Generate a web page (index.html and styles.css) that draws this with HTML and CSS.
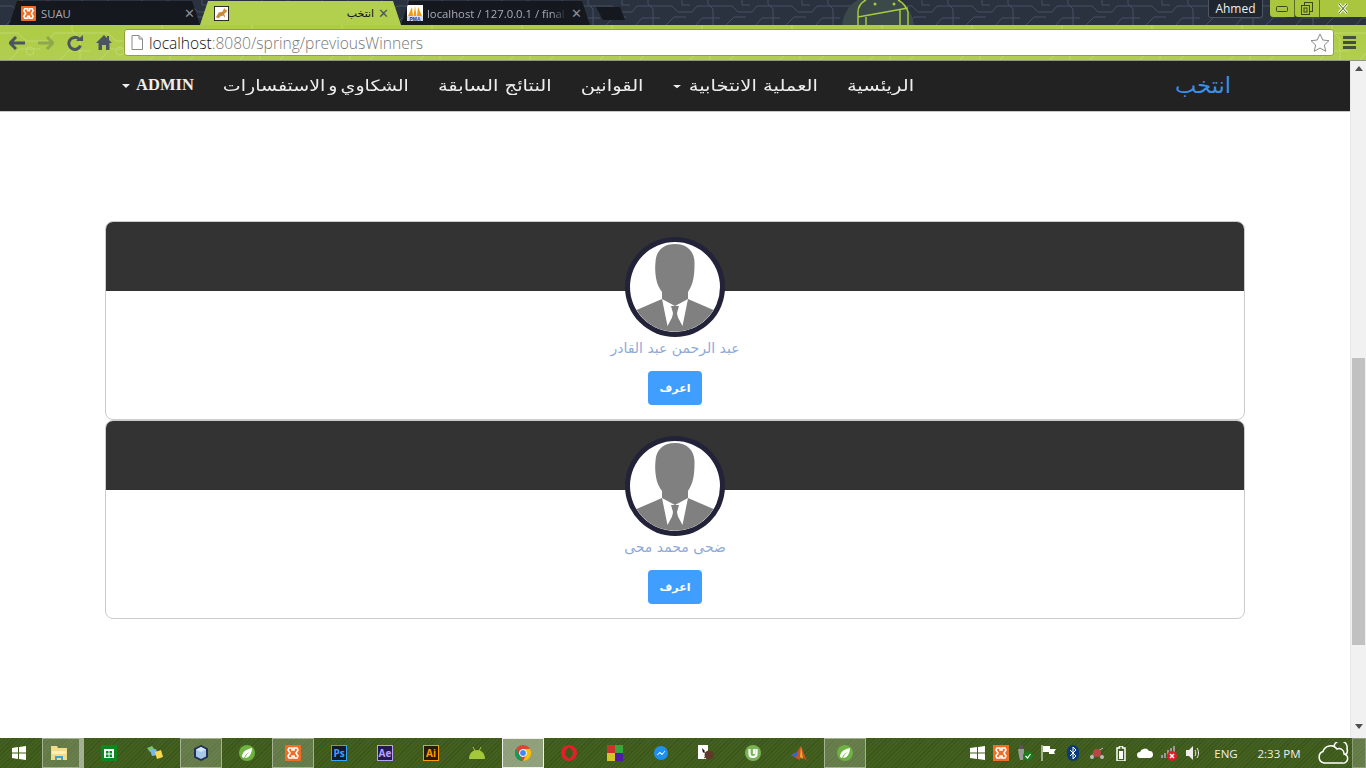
FILE: index.html
```html
<!DOCTYPE html>
<html lang="ar">
<head>
  <meta charset="UTF-8">
  <title>انتخب</title>
  <link rel="stylesheet" href="styles.css">
</head>
<body>
  <div class="tabstrip">
    <!-- circuit wallpaper -->
    <svg class="circuit" width="1366" height="25">
      <defs>
        <pattern id="wires" width="60" height="25" patternUnits="userSpaceOnUse">
          <path d="M0 6h12l6 6h14l5-6h23M6 25l8-8h12M36 25l6-7h18M48 0v4l5 5v16M22 0v5h8" fill="none" stroke="#465062" stroke-width="1"/>
        </pattern>
      </defs>
      <rect width="1366" height="25" fill="url(#wires)"/>
    </svg>
    <svg class="android" width="72" height="25" viewBox="0 0 72 25">
      <path d="M0 25C2 12 8 4 16 0h40c8 4 14 12 16 25z" fill="#3b4a48"/>
      <path d="M16 25V12C16 6 20 2 24 0M66 25V12C64 6 60 2 56 0M16 17l50-9M24 25v-8M58 25V9" fill="none" stroke="#a8c93f" stroke-width="1.500"/>
      <circle cx="33" cy="4" r="1.500" fill="#a8c93f"/><circle cx="52" cy="4" r="1.500" fill="#a8c93f"/>
    </svg>

    <div class="tab tab-first">
      <svg class="favicon" viewBox="0 0 16 16"><rect width="16" height="16" rx="1" fill="#f26c21"/><path d="M4 3h3v2h2V3h3l1 2-2 3 2 3-1 2H9v-2H7v2H4l-1-2 2-3-2-3z" fill="none" stroke="#fff" stroke-width="1.600"/></svg>
      <span class="tab-title">SUAU</span>
      <span class="tab-close">✕</span>
    </div>
    <div class="tab tab-active">
      <svg class="favicon" viewBox="0 0 16 16"><rect x=".5" y=".5" width="15" height="15" fill="#fff" stroke="#222"/><path d="M2 12l3-5 4-1 2-4 1 2 2 0-1 3-2 1 1 5-2-3-3 1-2 2z" fill="#c98a3a"/></svg>
      <span class="tab-title tab-title-end" dir="rtl">انتخب</span>
      <span class="tab-close">✕</span>
    </div>
    <div class="tab tab-third">
      <svg class="favicon" viewBox="0 0 16 16"><rect width="16" height="16" fill="#fff"/><path d="M1 11L5 2l1 9zM6.500 11L8 1l1.500 10zM10 11l1-9 4 9z" fill="#f29b12"/><rect y="11" width="16" height="5" fill="#d9dcf0"/><text class="pma" x="8" y="15.500">PMA</text></svg>
      <span class="tab-title tab-title-fade">localhost / 127.0.0.1 / final</span>
      <span class="tab-close">✕</span>
    </div>
    <div class="tab-new"></div>

    <div class="user-badge">Ahmed</div>
    <div class="win-controls">
      <span class="win-btn"><svg width="12" height="6"><rect x=".5" y=".5" width="11" height="5" rx="1" fill="none" stroke="#3c4a1a"/></svg></span>
      <span class="win-btn"><svg width="12" height="13"><rect x="3.500" y=".5" width="8" height="9" fill="none" stroke="#3c4a1a"/><rect x=".5" y="3.500" width="8" height="9" fill="#a9c63e" stroke="#3c4a1a"/><rect x="3" y="6" width="3" height="4" fill="none" stroke="#3c4a1a"/></svg></span>
      <span class="win-btn win-close"><svg width="12" height="11"><path d="M2 1l8 9M10 1l-8 9" stroke="#f3f7df" stroke-width="3"/><path d="M2 1l8 9M10 1l-8 9" stroke="#4a5a20" stroke-width="1"/></svg></span>
    </div>
  </div>

  <div class="toolbar">
    <svg class="toolbar-wires" width="1366" height="35">
      <defs>
        <pattern id="wires-light" width="90" height="35" patternUnits="userSpaceOnUse">
          <path d="M0 8h18l8 8h22l6-8h36M10 35l10-11h20M60 35l8-9h22M72 0v6l8 8v21" fill="none" stroke="#bfd96a" stroke-width="1"/>
          <circle cx="30" cy="26" r="4" fill="none" stroke="#bfd96a"/>
        </pattern>
      </defs>
      <rect width="1366" height="35" fill="url(#wires-light)"/>
    </svg>
    <svg class="tool" width="16" height="14" viewBox="0 0 16 14"><path d="M7 1L1 7l6 6M1 7h15" fill="none" stroke="#4a5560" stroke-width="3"/></svg>
    <svg class="tool" width="16" height="14" viewBox="0 0 16 14"><path d="M9 1l6 6-6 6M15 7H0" fill="none" stroke="#8fa84a" stroke-width="3"/></svg>
    <svg class="tool" width="16" height="16" viewBox="0 0 16 16"><path d="M13.500 10.500A6 6 0 1 1 12 4" fill="none" stroke="#4a5560" stroke-width="3"/><path d="M9 6h7V0z" fill="#4a5560"/></svg>
    <svg class="tool" width="16" height="15" viewBox="0 0 16 15"><path d="M8 0L0 8h2.500v7H6v-5h4v5h3.500V8H16l-3-3V1h-2v2z" fill="#4a5560"/></svg>
    <div class="urlbar">
      <svg width="12" height="15" viewBox="0 0 12 15"><path d="M1 .5h7l3.500 3.500v10.500H1zM8 .5V4h3.500" fill="#fff" stroke="#8a8a8a"/></svg>
      <span class="url"><b>localhost</b>:8080/spring/previousWinners</span>
      <svg class="star" width="20" height="19" viewBox="0 0 20 19"><path d="M10 1l2.800 6 6.200.7-4.600 4.300 1.300 6.300L10 15l-5.700 3.300L5.600 12 1 7.700 7.200 7z" fill="#fff" stroke="#8a8a8a"/></svg>
    </div>
    <div class="menu-btn"><i></i><i></i><i></i></div>
  </div>

  <div class="viewport">
    <div class="page" dir="rtl">
      <nav class="navbar">
        <div class="nav-inner">
          <a class="brand">انتخب</a>
          <ul class="nav-links">
            <li>الريئسية</li>
            <li>العملية الانتخابية <span class="caret"></span></li>
            <li>القوانين</li>
            <li>النتائج السابقة</li>
            <li class="nav-long">الشكاوي و الاستفسارات</li>
            <li class="nav-admin">ADMIN <span class="caret"></span></li>
          </ul>
        </div>
      </nav>

      <div class="container">
        <div class="card">
          <div class="card-head"></div>
          <svg class="avatar" viewBox="0 0 90 90">
            <path d="M45 2c12 0 19 7 19.500 18 0 5 0 10-1 16-1 6-3 10-5.500 14v7l25.500 11A45 45 0 0 1 6.500 68L32 57v-7c-3-4-5-8-6-14-1-6-1-11-.5-16C26 9 33 2 45 2z" fill="#808080"/>
            <path d="M32 57l13 7 13-7-5.500 27L45 70l-7.500 14z" fill="#fff"/>
            <path d="M41 64h8l-2 7 2 11-4 4-4-4 2-11z" fill="#808080"/>
          </svg>
          <div class="winner-name">عبد الرحمن عبد القادر</div>
          <button class="btn-more">اعرف</button>
        </div>

        <div class="card">
          <div class="card-head"></div>
          <svg class="avatar" viewBox="0 0 90 90">
            <path d="M45 2c12 0 19 7 19.500 18 0 5 0 10-1 16-1 6-3 10-5.500 14v7l25.500 11A45 45 0 0 1 6.500 68L32 57v-7c-3-4-5-8-6-14-1-6-1-11-.5-16C26 9 33 2 45 2z" fill="#808080"/>
            <path d="M32 57l13 7 13-7-5.500 27L45 70l-7.500 14z" fill="#fff"/>
            <path d="M41 64h8l-2 7 2 11-4 4-4-4 2-11z" fill="#808080"/>
          </svg>
          <div class="winner-name">ضحى محمد محى</div>
          <button class="btn-more">اعرف</button>
        </div>
      </div>
    </div>

    <div class="scrollbar">
      <span class="arrow-up"></span>
      <span class="thumb"></span>
      <span class="arrow-down"></span>
    </div>
  </div>

  <div class="taskbar">
    <div class="task task-start"><svg width="14" height="14" viewBox="0 0 14 14"><path d="M0 2l6-1v5.500H0zM7 1l7-1v6.500H7zM0 7.500h6V13l-6-1zM7 7.500h7V14l-7-1z" fill="#fff"/></svg></div>
    <div class="task task-open task-explorer"><svg width="18" height="16" viewBox="0 0 18 16"><path d="M1 1h6l1 2h9v12H1z" fill="#f2dc85"/><path d="M2 6h14v3H2z" fill="#fbf0bb"/><path d="M5 15v-4h8v4h-2v-2H7v2z" fill="#3ea2dc"/></svg></div>
    <div class="task"><svg width="16" height="16" viewBox="0 0 16 16"><rect width="16" height="16" fill="#0a8a1e"/><rect x="3" y="4" width="10" height="9" fill="#fff"/><path d="M5 6h2.500v2.500H5zM8.500 6H11v2.500H8.500zM5 9.500h2.500V12H5zM8.500 9.500H11V12H8.500z" fill="#0a8a1e"/></svg></div>
    <div class="task"><svg width="16" height="16" viewBox="0 0 16 16"><path d="M0 3l5-2 3 4-5 2z" fill="#7cc46d"/><path d="M3 5l6-1 2 6-6 1z" fill="#7ab6e8"/><path d="M8 7l6-2 2 7-6 2z" fill="#f6d94e"/></svg></div>
    <div class="task task-open"><svg width="16" height="16" viewBox="0 0 16 16"><path d="M8 0l7 3.500v9L8 16l-7-3.500v-9z" fill="#1f2f55"/><path d="M8 2l5 2.500v7L8 14l-5-2.500v-7z" fill="#a9c7e8"/><path d="M8 2l5 2.500L8 7 3 4.500z" fill="#d7e6f5"/></svg></div>
    <div class="task"><svg width="16" height="16" viewBox="0 0 16 16"><circle cx="8" cy="8" r="8" fill="#6db33f"/><path d="M3 12c0-5 4-8 10-9 0 6-3 10-7 10 1-3 3-5 5-6-3 1-5 3-6 6z" fill="#fff"/></svg></div>
    <div class="task task-open"><svg width="16" height="16" viewBox="0 0 16 16"><rect width="16" height="16" rx="1" fill="#f26c21"/><path d="M4 3h3v2h2V3h3l1 2-2 3 2 3-1 2H9v-2H7v2H4l-1-2 2-3-2-3z" fill="none" stroke="#fff" stroke-width="1.600"/></svg></div>
    <div class="task"><span class="app-tile app-ps">Ps</span></div>
    <div class="task"><span class="app-tile app-ae">Ae</span></div>
    <div class="task"><span class="app-tile app-ai">Ai</span></div>
    <div class="task"><svg width="16" height="12" viewBox="0 0 16 12"><path d="M0 12C0 6 4 3 8 3s8 3 8 9z" fill="#a4c639"/><path d="M4 0l2 4M12 0l-2 4" stroke="#a4c639"/></svg></div>
    <div class="task task-open task-active"><svg width="16" height="16" viewBox="0 0 16 16"><circle cx="8" cy="8" r="8" fill="#db4437"/><path d="M8 16A8 8 0 0 1 1 4l4 7z" fill="#0f9d58"/><path d="M8 4h7a8 8 0 0 1-7 12l3-6z" fill="#f4c20d"/><circle cx="8" cy="8" r="3.500" fill="#4285f4" stroke="#fff"/></svg></div>
    <div class="task"><svg width="16" height="16" viewBox="0 0 16 16"><circle cx="8" cy="8" r="6" fill="none" stroke="#e0202a" stroke-width="4"/><ellipse cx="8" cy="8" rx="2.500" ry="5.500" fill="#3c5a1c"/></svg></div>
    <div class="task"><svg width="16" height="16" viewBox="0 0 16 16"><rect width="8" height="8" fill="#c8352a"/><rect x="8" width="8" height="8" fill="#3aa53a"/><rect y="8" width="8" height="8" fill="#d4c62a"/><rect x="8" y="8" width="8" height="8" fill="#4a1fa0"/></svg></div>
    <div class="task"><svg width="14" height="14" viewBox="0 0 14 14"><circle cx="7" cy="7" r="7" fill="#1e90f0"/><path d="M3 9l3-3 2 2 3-3-3 4-2-2z" fill="#fff" stroke="#fff" stroke-width=".5"/></svg></div>
    <div class="task"><svg width="18" height="16" viewBox="0 0 18 16"><rect width="10" height="14" fill="#fff"/><path d="M4 3l3 3-2 2z" fill="#111"/><circle cx="11" cy="10" r="4.500" fill="#5d3a2a"/><path d="M6 7l10 6M6 13l10-6" stroke="#5d3a2a"/></svg></div>
    <div class="task"><svg width="16" height="16" viewBox="0 0 16 16"><circle cx="8" cy="8" r="8" fill="#79b556"/><path d="M4.500 4v5c0 4 7 4 7 0V4M9 9V4" fill="none" stroke="#fff" stroke-width="2.200"/></svg></div>
    <div class="task"><svg width="16" height="15" viewBox="0 0 16 15"><path d="M0 9l6-3 4-6 6 15-5-4-3 3z" fill="#c8502a"/><path d="M0 9l6-3 1 3-3 2z" fill="#2f6bc0"/><path d="M10 0l2 13-3-2z" fill="#e8b020"/></svg></div>
    <div class="task task-open"><svg width="16" height="16" viewBox="0 0 16 16"><circle cx="8" cy="8" r="8" fill="#6db33f"/><path d="M3 12c0-5 4-8 10-9 0 6-3 10-7 10 1-3 3-5 5-6-3 1-5 3-6 6z" fill="#fff"/></svg></div>

    <div class="tray">
      <span class="tray-cell"><svg width="15" height="14" viewBox="0 0 15 14"><path d="M0 2l7-1v5.500H0zM8 1l7-1v6.500H8zM0 7.500h7V13l-7-1zM8 7.500h7V14l-7-1z" fill="#fff"/></svg></span>
      <span class="tray-cell"><svg width="16" height="16" viewBox="0 0 16 16"><rect width="16" height="16" fill="#f26c21"/><path d="M4 3h3v2h2V3h3l1 2-2 3 2 3-1 2H9v-2H7v2H4l-1-2 2-3-2-3z" fill="none" stroke="#fff" stroke-width="1.600"/></svg></span>
      <span class="tray-cell"><svg width="16" height="16" viewBox="0 0 16 16"><path d="M1 4h6v7l-1 4H3l-1-4z" fill="#9a9a9a"/><rect x="2" width="4" height="4" fill="#555"/><circle cx="11" cy="11" r="5" fill="#1d7a1d"/><path d="M8.500 11l2 2 3-4" fill="none" stroke="#fff" stroke-width="1.200"/></svg></span>
      <span class="tray-cell"><svg width="16" height="16" viewBox="0 0 16 16"><path d="M1 0v16" stroke="#fff"/><path d="M2 1h7v3h6l-2 3 1 2H8V7H2z" fill="#fff"/></svg></span>
      <span class="tray-cell"><svg width="12" height="16" viewBox="0 0 12 16"><rect width="12" height="16" rx="6" fill="#0a3a78"/><path d="M3 5l6 6-3 3V2l3 3-6 6" fill="none" stroke="#fff"/></svg></span>
      <span class="tray-cell"><svg width="16" height="14" viewBox="0 0 16 14"><path d="M1 11l6-5 7-4" stroke="#bbb"/><circle cx="8" cy="7" r="4" fill="#b44"/><circle cx="3" cy="11" r="2" fill="#bbb"/><circle cx="13" cy="11" r="2" fill="#bbb"/></svg></span>
      <span class="tray-cell"><svg width="10" height="15" viewBox="0 0 10 15"><path d="M1 2h2.500V0h3v2H9v13H1z" fill="none" stroke="#fff" stroke-width="1.500"/><rect x="3" y="5" width="4" height="8" fill="#fff"/></svg></span>
      <span class="tray-cell"><svg width="16" height="10" viewBox="0 0 16 10"><path d="M3 10a3 3 0 0 1 0-6 5 5 0 0 1 9-1 3.500 3.500 0 0 1 1 7z" fill="#fff"/></svg></span>
      <span class="tray-cell"><svg width="16" height="16" viewBox="0 0 16 16"><path d="M0 10h2v3H0zM3 8h2v5H3zM6 5h2v8H6zM9 3h2v4H9zM12 1h2v6h-2z" fill="#9a9a9a"/><circle cx="11" cy="11" r="5" fill="#e21b2c"/><path d="M9 9l4 4M13 9l-4 4" stroke="#fff" stroke-width="1.500"/></svg></span>
      <span class="tray-cell"><svg width="14" height="14" viewBox="0 0 14 14"><path d="M0 4h3l4-4v14l-4-4H0z" fill="#eee"/><path d="M9 4c1 2 1 4 0 6M11 2c2 3 2 7 0 10" fill="none" stroke="#eee"/></svg></span>
      <span class="tray-lang">ENG</span>
      <span class="tray-clock">2:33 PM</span>
      <svg class="tray-cloud" width="32" height="22" viewBox="0 0 32 22"><path d="M7 21a6 6 0 0 1-1-11.500A8 8 0 0 1 20 7a5 5 0 0 1 7 5 4.500 4.500 0 0 1-2 9z" fill="none" stroke="#fff" stroke-width="1.500"/><path d="M17 4a6 6 0 0 1 13 3 5 5 0 0 1-2 6" fill="none" stroke="#fff" stroke-width="1.500"/></svg>
      <span class="show-desktop"></span>
    </div>
  </div>
</body>
</html>
```

FILE: styles.css
```css
* {
  box-sizing: border-box;
}
html, body {
  height: 100%;
}
body {
  margin: 0;
  display: flex;
  flex-direction: column;
  overflow: hidden;
  font-family: "Open Sans", "DejaVu Sans", sans-serif;
  background-color: #fff;
}

/* browser chrome */
.tabstrip {
  position: relative;
  flex: 0 0 25px;
  display: flex;
  align-items: flex-end;
  padding-left: 9px;
  background-color: #2a3240;
}
.circuit, .android {
  position: absolute;
  top: 0;
}
.circuit {
  left: 0;
}
.android {
  left: 842px;
}
.tab {
  position: relative;
  display: flex;
  align-items: center;
  height: 24px;
  color: #aab;
  font-size: 11.3px;
  background-color: #15181e;
  clip-path: polygon(8px 0, calc(100% - 8px) 0, 100% 100%, 0 100%);
}
.tab-first {
  width: 191px;
  padding: 0 5px 0 12px;
}
.tab-active {
  width: 201px;
  padding: 0 12px 0 14px;
  color: #111;
  background-color: #b3cf4e;
}
.tab-third {
  width: 189px;
  padding: 0 8px 0 6px;
}
.favicon {
  flex: 0 0 15px;
  width: 15px;
  height: 15px;
  margin-right: 5px;
}
.tab-third .favicon {
  flex-basis: 16px;
  width: 16px;
  height: 16px;
  margin-right: 4px;
}
.pma {
  fill: #33366e;
  font-family: "Liberation Sans", sans-serif;
  font-size: 5px;
  font-weight: bold;
  text-anchor: middle;
}
.tab-title {
  flex: 1;
  overflow: hidden;
  white-space: nowrap;
}
.tab-title-end {
  text-align: right;
  padding-left: 10px;
  font-family: "DejaVu Sans", sans-serif;
  font-size: 11px;
}
.tab-title-fade {
  -webkit-mask-image: linear-gradient(to left, transparent, #000 16px);
  mask-image: linear-gradient(to left, transparent, #000 16px);
}
.tab-close {
  margin-left: 4px;
  font-size: 13px;
  font-weight: bold;
  line-height: 1;
  color: #8d9096;
}
.tab-active .tab-close {
  color: #4a5560;
}
.tab-new {
  position: relative;
  width: 29px;
  height: 13px;
  margin: 0 0 5px 6px;
  background-color: #15181e;
  clip-path: polygon(0 0, 83% 0, 100% 100%, 24% 100%);
}
.user-badge {
  position: absolute;
  top: 0;
  left: 1208px;
  width: 55px;
  height: 18px;
  color: #eee;
  font-size: 12px;
  line-height: 17px;
  text-align: center;
  background-color: #20262f;
  border: 1px solid #4b5563;
  border-top: 0;
  border-radius: 0 0 3px 3px;
}
.win-controls {
  position: absolute;
  top: 0;
  left: 1270px;
  display: flex;
  width: 96px;
  height: 17px;
}
.win-btn {
  display: flex;
  align-items: center;
  justify-content: center;
  width: 25px;
  background-color: #a9c63e;
  border-right: 1px solid #5d6d25;
  border-radius: 0 0 0 3px;
}
.win-close {
  flex: 1;
  border-right: 0;
  border-radius: 0;
}
.toolbar {
  position: relative;
  flex: 0 0 36px;
  display: flex;
  align-items: center;
  padding: 0 10px 0 9px;
  background: linear-gradient(#aecb45, #b2ce50);
  border-bottom: 1px solid #8d9a78;
}
.toolbar-wires {
  position: absolute;
  top: 0;
  left: 0;
}
.tool, .urlbar, .menu-btn {
  position: relative;
}
.tool {
  flex: none;
  margin-right: 13px;
}
.urlbar {
  flex: 1;
  display: flex;
  align-items: center;
  gap: 6px;
  height: 27px;
  margin-left: -1px;
  padding: 0 3px 0 6px;
  background-color: #fff;
  border: 1px solid #8ea33d;
  border-radius: 3px;
}
.url {
  flex: 1;
  color: #777;
  font-size: 15.6px;
  font-weight: 300;
}
.url b {
  color: #111;
  font-weight: 300;
}
.menu-btn {
  display: flex;
  flex-direction: column;
  gap: 2px;
  width: 13px;
  margin-left: 9px;
}
.menu-btn i {
  height: 3px;
  background-color: #454f40;
}

.viewport {
  flex: 1;
  display: flex;
  min-height: 0;
}
.page {
  flex: 1;
  min-width: 0;
  background-color: #fff;
}
.navbar {
  height: 51px;
  background-color: #222;
  border-bottom: 1px solid #c8c8c8;
}
.nav-inner {
  display: flex;
  align-items: center;
  height: 50px;
  margin: 0 105px;
  padding: 0 14px 2px;
  font-family: "DejaVu Sans", sans-serif;
}
.brand {
  color: #3b8fe8;
  font-size: 22.5px;
  margin-left: 261px;
}
.nav-links {
  display: flex;
  align-items: center;
  gap: 29px;
  margin: 0;
  padding: 0;
  list-style: none;
  color: #eee;
  font-size: 19.5px;
  white-space: nowrap;
}
/* the arabic face here is narrower than the original, so flatten it */
.nav-links li {
  transform: scaleY(0.82);
}
.nav-links .nav-long {
  font-size: 19px;
  word-spacing: -3px;
}
.nav-links .nav-admin {
  font-family: "Liberation Serif", serif;
  font-weight: bold;
  font-size: 16.5px;
  transform: none;
}
.caret {
  display: inline-block;
  margin-right: 2px;
  vertical-align: middle;
  border-top: 4px solid #eee;
  border-right: 4px solid transparent;
  border-left: 4px solid transparent;
}
.container {
  width: 1140px;
  margin: 109px auto 0;
}
.card {
  display: flex;
  flex-direction: column;
  align-items: center;
  height: 199px;
  overflow: hidden;
  background-color: #fff;
  border: 1px solid #ccc;
  border-radius: 8px;
}
.card-head {
  align-self: stretch;
  flex: 0 0 69px;
  background-color: #333;
}
.avatar {
  flex: none;
  width: 100px;
  height: 100px;
  margin-top: -54px;
  border: 5px solid rgba(10, 10, 35, 0.9);
  border-radius: 50%;
  background-color: #fff;
}
.winner-name {
  margin-top: 3px;
  color: #8fa9d8;
  font-family: "DejaVu Sans", sans-serif;
  font-size: 14px;
  line-height: 16px;
}
.btn-more {
  width: 54px;
  height: 34px;
  margin-top: 15px;
  padding: 0;
  color: #fff;
  font-family: "DejaVu Sans", sans-serif;
  font-size: 11px;
  font-weight: bold;
  background-color: #409eff;
  border: 0;
  border-radius: 4px;
}

.scrollbar {
  flex: 0 0 16px;
  display: flex;
  flex-direction: column;
  align-items: center;
  background-color: #f1f1f1;
  border-left: 1px solid #e8e8e8;
}
.arrow-up, .arrow-down {
  flex: none;
  border-right: 4px solid transparent;
  border-left: 4px solid transparent;
}
.arrow-up {
  margin-top: 5px;
  border-bottom: 5px solid #505050;
}
.arrow-down {
  margin-top: 79px;
  border-top: 5px solid #505050;
}
.thumb {
  flex: none;
  width: 13px;
  height: 287px;
  margin-top: 287px;
  background-color: #c1c1c1;
}

/* windows taskbar */
.taskbar {
  flex: 0 0 30px;
  display: flex;
  gap: 4px;
  background-color: #3f5a1e;
  background-image: repeating-linear-gradient(135deg, #3b561b 0 1px, #44601f 1px 3px);
}
.task {
  flex: 0 0 42px;
  display: flex;
  align-items: center;
  justify-content: center;
  border: 1px solid transparent;
}
.task-start {
  flex-basis: 38px;
}
.task-open {
  background-color: rgba(255, 255, 255, 0.2);
  border-color: rgba(255, 255, 255, 0.4);
}
.task-active {
  background-color: rgba(255, 255, 255, 0.42);
  border-color: #eee;
}
.task-explorer {
  padding-right: 4px;
  border-right-width: 5px;
}
.app-tile {
  display: block;
  width: 16px;
  height: 16px;
  font-family: "Open Sans", sans-serif;
  font-size: 10px;
  font-weight: bold;
  line-height: 14px;
  text-align: center;
  background-color: #14192b;
  border: 1px solid;
}
.app-ps {
  color: #31a8ff;
}
.app-ae {
  color: #b9a0ff;
  background-color: #241a4d;
}
.app-ai {
  color: #ff9a00;
  background-color: #2d1a06;
}
.tray {
  flex: 1;
  display: flex;
  align-items: center;
  justify-content: flex-end;
  color: #eee;
  font-size: 11.5px;
}
.tray-cell {
  flex: 0 0 24px;
  display: flex;
  align-items: center;
  justify-content: center;
}
.tray-lang {
  width: 34px;
  margin-left: 4px;
  text-align: center;
}
.tray-clock {
  width: 60px;
  margin-left: 6px;
  text-align: center;
}
.tray-cloud {
  flex: none;
  margin-left: 8px;
}
.show-desktop {
  align-self: stretch;
  width: 14px;
  margin-left: 3px;
  background-color: rgba(255, 255, 255, 0.2);
  border: 1px solid rgba(255, 255, 255, 0.25);
}
```
